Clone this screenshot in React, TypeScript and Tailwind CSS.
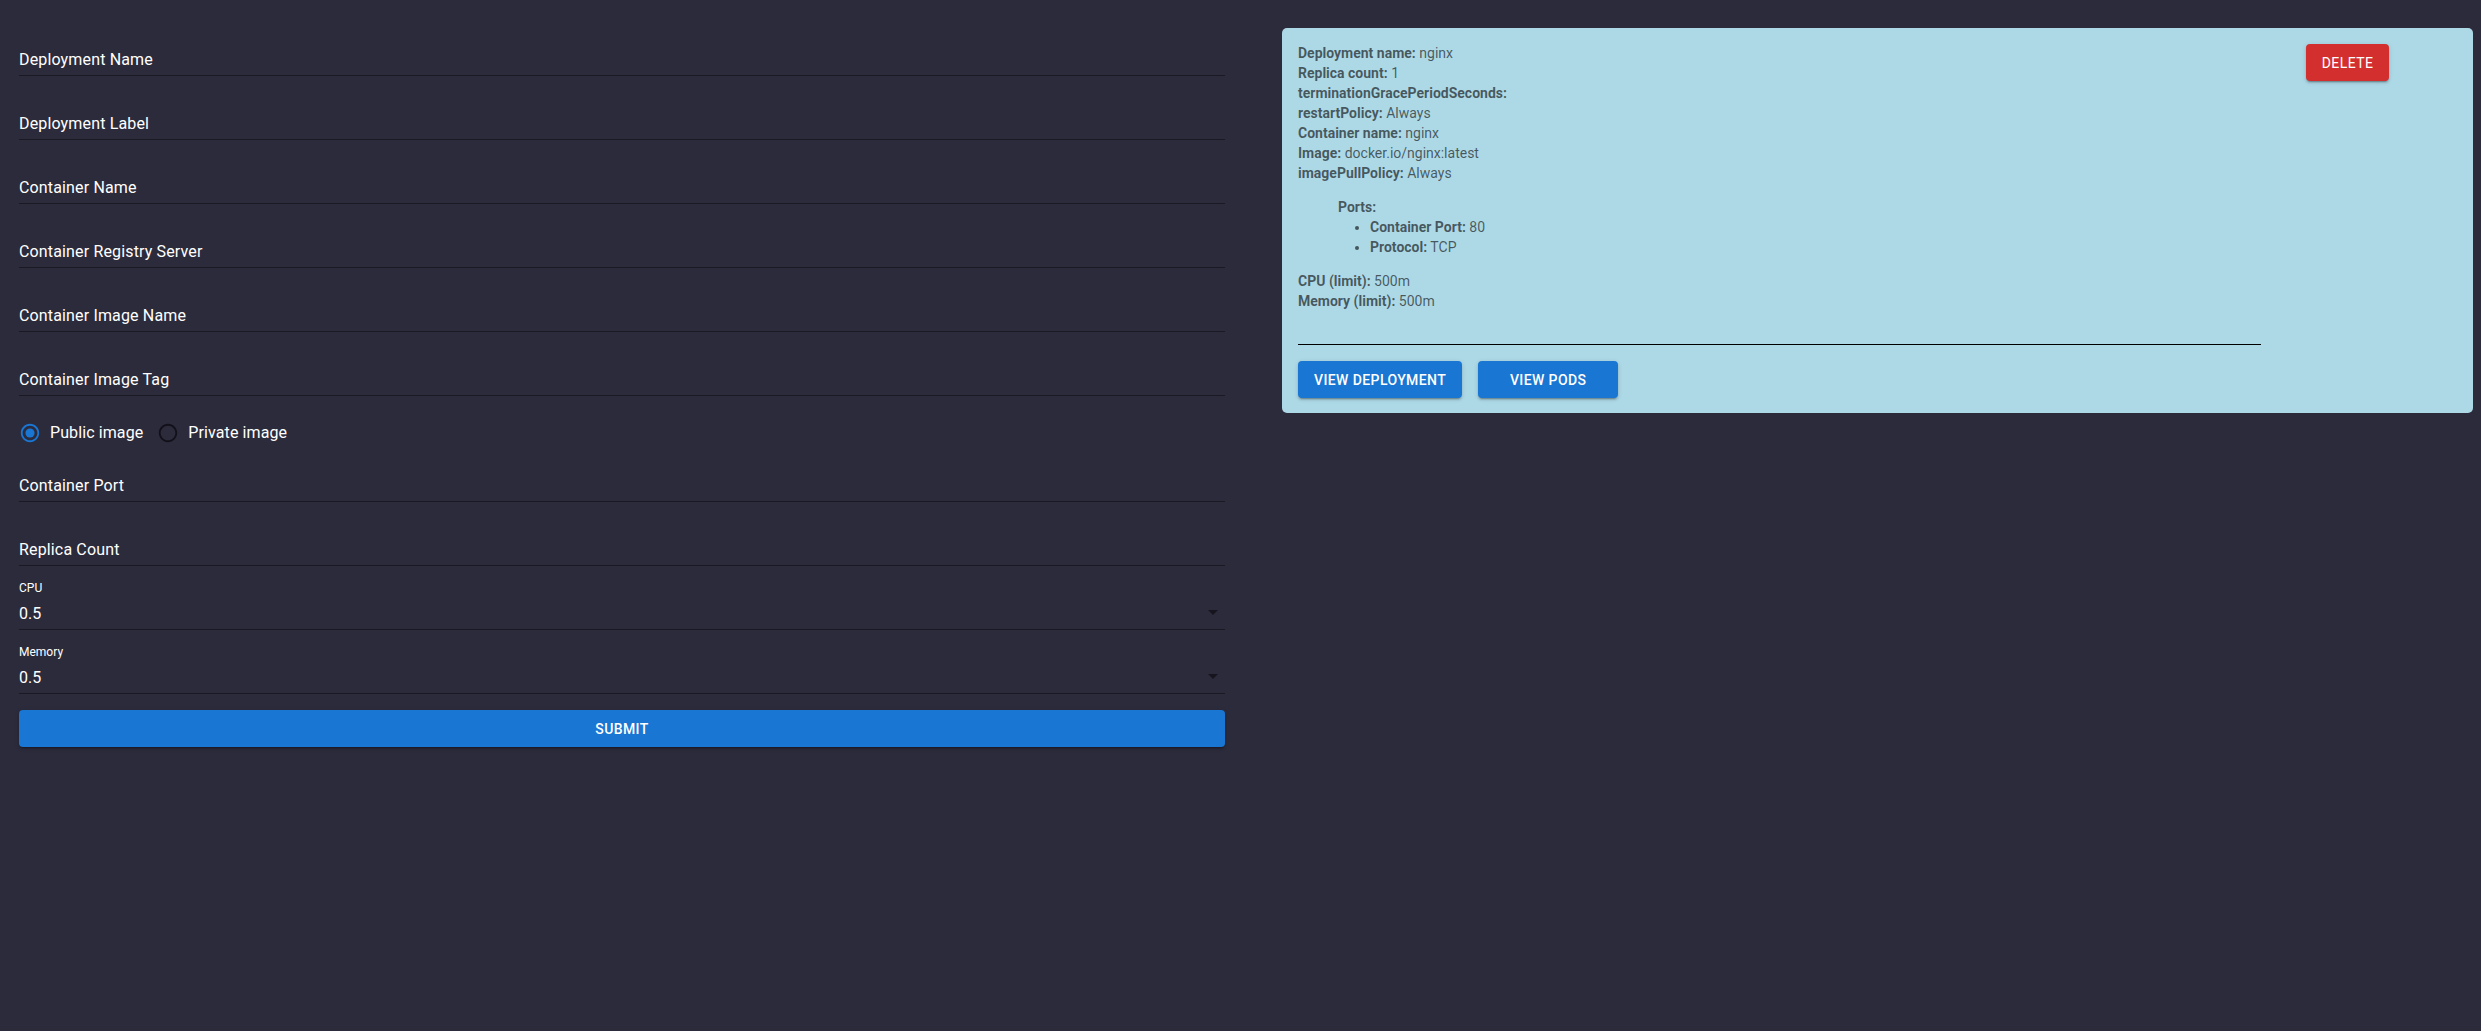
import React from "react";

const fields = [
    "Deployment Name",
    "Deployment Label",
    "Container Name",
    "Container Registry Server",
    "Container Image Name",
    "Container Image Tag",
];

const muiShadow =
    "shadow-[0_3px_1px_-2px_rgba(0,0,0,0.2),0_2px_2px_0_rgba(0,0,0,0.14),0_1px_5px_0_rgba(0,0,0,0.12)]";

const TextField = ({ label, first }: { label: string; first?: boolean }) => (
    <div className={`${first ? "" : "mt-4"} h-12 pt-4`}>
        <div className="h-8 border-b border-[#1b1a24] pt-1 leading-[23px] text-base text-white tracking-[0.15px]">
            {label}
        </div>
    </div>
);

const SelectField = ({ label, value }: { label: string; value: string }) => (
    <div className="mt-4 h-12">
        <div className="h-4 text-xs leading-3 text-white">{label}</div>
        <div className="h-8 border-b border-[#1b1a24] pt-1 leading-[23px] text-base text-white flex justify-between">
            <span>{value}</span>
            <svg viewBox="0 0 24 24" className="w-6 h-6 -mt-[2px] fill-[#16151e]">
                <path d="M7 10l5 5 5-5z" />
            </svg>
        </div>
    </div>
);

const Radio = ({ checked, label }: { checked?: boolean; label: string }) => (
    <label className="flex items-center">
        <svg viewBox="0 0 24 24" className={`w-[22px] h-[22px] ${checked ? "fill-[#1976d2]" : "fill-[#12111a]"}`}>
            <path d="M12 2C6.48 2 2 6.48 2 12s4.48 10 10 10 10-4.48 10-10S17.52 2 12 2zm0 18c-4.42 0-8-3.58-8-8s3.58-8 8-8 8 3.58 8 8-3.58 8-8 8z" />
            {checked && <circle cx="12" cy="12" r="5" />}
        </svg>
        <span className="ml-[9px] text-base text-white tracking-[0.1px]">{label}</span>
    </label>
);

const Row = ({ k, v }: { k: string; v?: string }) => (
    <div className="leading-5">
        <span className="font-bold">{k}</span> {v}
    </div>
);

export default function App() {
    return (
        <div className="min-h-screen bg-[#2c2b3c] font-['Roboto','Liberation_Sans',sans-serif] flex items-start">
            <div className="w-[1206px] ml-[19px] pt-7 flex flex-col">
                {fields.map((f, i) => (
                    <TextField key={f} label={f} first={i === 0} />
                ))}

                <div className="mt-4 h-[42px] flex items-center gap-[14px]">
                    <Radio checked label="Public image" />
                    <Radio label="Private image" />
                </div>

                <TextField label="Container Port" first />
                <TextField label="Replica Count" />
                <SelectField label="CPU" value="0.5" />
                <SelectField label="Memory" value="0.5" />

                <button
                    className={`mt-4 h-[37px] rounded bg-[#1976d2] text-white text-sm font-medium uppercase tracking-[0.4px] ${muiShadow}`}
                >
                    Submit
                </button>
            </div>

            <div className="ml-[57px] mt-[28px] w-[1191px] bg-[#add8e6] rounded-[5px] pl-4 pt-[15px] pb-[15px] flex items-start">
                <div className="w-[963px] text-sm text-black/60">
                    <Row k="Deployment name:" v="nginx" />
                    <Row k="Replica count:" v="1" />
                    <Row k="terminationGracePeriodSeconds:" />
                    <Row k="restartPolicy:" v="Always" />
                    <Row k="Container name:" v="nginx" />
                    <Row k="Image:" v="docker.io/nginx:latest" />
                    <Row k="imagePullPolicy:" v="Always" />

                    <div className="my-[14px] pl-10">
                        <div className="font-bold leading-5">Ports:</div>
                        <ul className="list-disc pl-8">
                            <li className="leading-5">
                                <span className="font-bold">Container Port:</span> 80
                            </li>
                            <li className="leading-5">
                                <span className="font-bold">Protocol:</span> TCP
                            </li>
                        </ul>
                    </div>

                    <Row k="CPU (limit):" v="500m" />
                    <Row k="Memory (limit):" v="500m" />

                    <div className="mt-[33px] border-t border-black" />

                    <div className="mt-4 flex gap-4">
                        <button
                            className={`h-[37px] px-4 rounded bg-[#1976d2] text-white text-sm font-medium uppercase tracking-[0.4px] ${muiShadow}`}
                        >
                            View Deployment
                        </button>
                        <button
                            className={`h-[37px] w-[140px] rounded bg-[#1976d2] text-white text-sm font-medium uppercase tracking-[0.4px] ${muiShadow}`}
                        >
                            View Pods
                        </button>
                    </div>
                </div>

                <button
                    className={`ml-[45px] mt-px h-[37px] w-[83px] rounded bg-[#d32f2f] text-white text-sm uppercase tracking-[0.4px] ${muiShadow}`}
                >
                    Delete
                </button>
            </div>
        </div>
    );
}
